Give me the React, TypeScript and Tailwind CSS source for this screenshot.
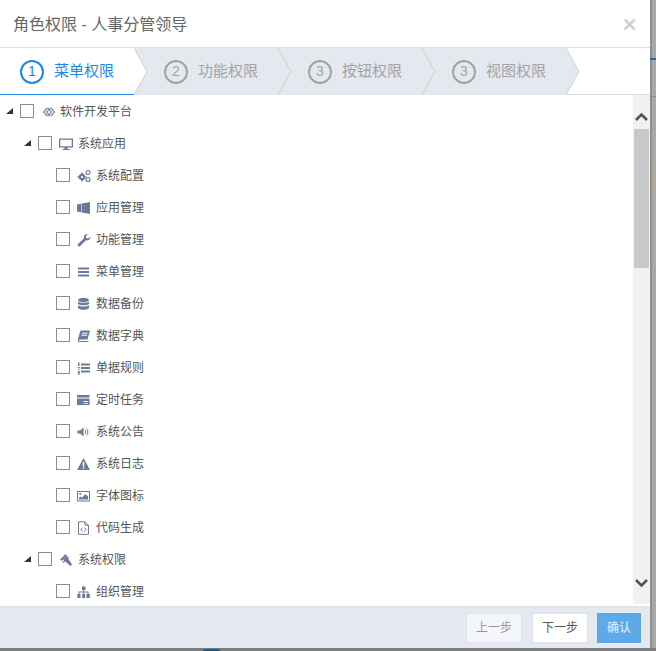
import type { ReactNode } from 'react';

const ICON = '#6b7a99';

// small 14x14 glyphs drawn to look like the tree's font icons
const icons: Record<string, ReactNode> = {
  code: (
    <g fill="none" stroke="#7a8aa8" strokeWidth="1.2">
      <path d="M5 3 1.500 7 5 11" />
      <path d="M9 3 12.500 7 9 11" />
      <path d="M8.500 3 4.500 7l3.500 4M5.500 3l4 4-4 4" />
    </g>
  ),
  desktop: <path fill={ICON} d="M0 1.500h14v9H8.500v1.500h2V13h-7v-1h2v-1.500H0zM1.300 2.800v6.400h11.400V2.800z" fillRule="evenodd" />,
  cogs: (
    <g fill={ICON}>
      <circle cx="5" cy="8" r="3.200" />
      <circle cx="5" cy="8" r="1.100" fill="#fff" />
      <path d="M4.200 3.500h1.600v1.400H4.200zM4.200 11h1.600v1.500H4.200zM.5 7.200h1.400v1.600H.5zM8.100 7.200h1.400v1.600H8.100z" />
      <circle cx="11" cy="3.500" r="2" fill="none" stroke={ICON} strokeWidth="1.200" />
      <circle cx="11" cy="10.500" r="2" fill="none" stroke={ICON} strokeWidth="1.200" />
    </g>
  ),
  windows: <path fill={ICON} d="M0 3.500 4.500 2.600v8.800L0 10.500zM5 2.400 13 1v12l-8-1.500z" />,
  wrench: <path fill={ICON} d="M1 13 0.500 11.500 6.800 5.500C6.300 3 8 .8 10.800 1L8.800 3.200l.6 1.900 1.900.5L13.500 3.500C13.800 6.200 11.500 8 9 7.300L2.600 13.500z" />,
  bars: <path fill={ICON} d="M1 2.500h11v2H1zM1 6h11v2H1zM1 9.500h11v2H1z" />,
  database: (
    <g fill={ICON}>
      <ellipse cx="6.500" cy="3" rx="5.500" ry="2.200" />
      <path d="M1 4.500C2.500 6.200 10.500 6.200 12 4.500V7C10.500 8.700 2.500 8.700 1 7zM1 8.200C2.500 9.900 10.500 9.900 12 8.200V11c-1.500 2.400-9.500 2.400-11 0z" />
    </g>
  ),
  book: <path fill={ICON} d="M3.500 1.500h9.500L10.500 10.500H2.800c-.9 0-1 1.500 0 1.500h8.500v1H2.300C.8 13 .5 11.500 1 10zM5 3.800v1h5.500v-1zM4.500 5.800v1H10v-1z" fillRule="evenodd" />,
  listol: (
    <g fill={ICON}>
      <path d="M4 2.500h9v2H4zM4 6h9v2H4zM4 9.500h9v2H4z" />
      <path d="M1 1.500h1.500v3.500H1zM.8 6h2v1h-2zM1 7.800h1.800v1H1zM.8 10h2v3.500h-2v-1h1v-.3h-1v-1h1v-.2h-1z" />
    </g>
  ),
  card: <path fill={ICON} d="M0 2h12.500v2.500H0zM0 5.500h12.500V12H0zM6.500 8v1h4.500V8zM6.500 10v.8h4.500V10z" fillRule="evenodd" />,
  bullhorn: (
    <g>
      <path fill={ICON} d="M.5 5.500h2.500L6.500 2.500v9L3 8.500H.5z" />
      <path fill="none" stroke={ICON} d="M8 5c.9 1 .9 3 0 4M9.700 3.800c1.600 1.800 1.600 4.600 0 6.400" />
    </g>
  ),
  warning: <path fill={ICON} d="M6.500 1 13 13H0zM5.700 5v4.500h1.600V5zM5.700 10.200v1.500h1.600v-1.500z" fillRule="evenodd" />,
  picture: (
    <g fill={ICON}>
      <path d="M0 2h13v10.500H0zM1 3v8.500h11V3z" fillRule="evenodd" />
      <circle cx="3.300" cy="5" r="1.100" />
      <path d="M2 10.500V8.800L3.500 7.500l1.300 1.200L8.500 5 11 7.500v3z" />
    </g>
  ),
  filecode: (
    <g fill="none" stroke={ICON} strokeWidth="1">
      <path d="M1.500 .8H8L11.500 4.300v9h-10zM8 .8v3.500h3.500" />
      <path d="M5.500 6.500 4 8.500l1.500 2M7.500 6.500l1.500 2-1.500 2" />
    </g>
  ),
  gavel: (
    <g fill={ICON}>
      <path d="M4 6.500 7.500 3l5.500 8.500-1.500 1.500z" />
      <path d="M1 6.500 6.500 1 8 2.500 2.500 8z" />
      <path d="M3.500 9 9 3.500l1 1L4.500 10z" />
    </g>
  ),
  sitemap: <path fill={ICON} d="M5 1.500h3.500v3.500H7.200v1.500H11.500v2.500h1.300V13H9.500V9h1V7.500H7.200V9h1v4H5.200V9h1V7.500H2.500V9h1v4H.3V9h1.200V6.500h4.700V5H5z" />,
};

type Row = { label: string; level: 0 | 1 | 2; icon: string };

const rows: Row[] = [
  { label: '软件开发平台', level: 0, icon: 'code' },
  { label: '系统应用', level: 1, icon: 'desktop' },
  { label: '系统配置', level: 2, icon: 'cogs' },
  { label: '应用管理', level: 2, icon: 'windows' },
  { label: '功能管理', level: 2, icon: 'wrench' },
  { label: '菜单管理', level: 2, icon: 'bars' },
  { label: '数据备份', level: 2, icon: 'database' },
  { label: '数据字典', level: 2, icon: 'book' },
  { label: '单据规则', level: 2, icon: 'listol' },
  { label: '定时任务', level: 2, icon: 'card' },
  { label: '系统公告', level: 2, icon: 'bullhorn' },
  { label: '系统日志', level: 2, icon: 'warning' },
  { label: '字体图标', level: 2, icon: 'picture' },
  { label: '代码生成', level: 2, icon: 'filecode' },
  { label: '系统权限', level: 1, icon: 'gavel' },
  { label: '组织管理', level: 2, icon: 'sitemap' },
];

const steps = [
  { n: 1, label: '菜单权限' },
  { n: 2, label: '功能权限' },
  { n: 3, label: '按钮权限' },
  { n: 3, label: '视图权限' },
];

function Step({ n, label, active }: { n: number; label: string; active: boolean }) {
  return (
    <div className={active ? 'relative w-[134px] h-[47px] bg-white' : 'relative w-[144px] h-[47px] bg-[#e4e8ef]'}>
      <div className={active ? 'flex items-center h-full pl-[20px] gap-[10px]' : 'flex items-center h-full pl-[30px] gap-[10px]'}>
        <span className={active
          ? 'flex items-center justify-center w-6 h-6 rounded-full border-2 border-[#1e88e5] text-[#1e88e5] text-[14px]'
          : 'flex items-center justify-center w-6 h-6 rounded-full border-2 border-[#a3a3a3] text-[#a3a3a3] text-[14px]'}>
          {n}
        </span>
        <span className={active ? 'text-[15px] text-[#1e88e5]' : 'text-[15px] text-[#a3a3a3]'}>{label}</span>
      </div>
      {active && <div className="absolute left-0 right-0 bottom-0 h-[1px] bg-[#1e88e5]" />}
      <svg className="absolute top-0 left-full z-10" width="14" height="47" viewBox="0 0 14 47">
        <path d="M0 0 13 23.500 0 47z" fill={active ? '#fff' : '#e4e8ef'} />
        <path d="M0 0 13 23.500 0 47" fill="none" stroke="#cfcfcf" />
      </svg>
    </div>
  );
}

function TreeRow({ row }: { row: Row }) {
  return (
    <div className={
      row.level === 0 ? 'flex items-center h-8 pl-[6px]' : row.level === 1 ? 'flex items-center h-8 pl-[24px]' : 'flex items-center h-8 pl-[56px]'
    }>
      {row.level < 2 && (
        <svg className="mr-[7px] mb-[2px]" width="7" height="7" viewBox="0 0 7 7"><path d="M7 0V6H0z" fill="#333" /></svg>
      )}
      <span className="w-[14px] h-[14px] mb-[2px] border border-[#8c8c8c] bg-white shrink-0" />
      <svg className={row.level === 0 ? 'ml-[8px] mr-[4px]' : 'ml-[7px] mr-[5px]'} width="14" height="14" viewBox="0 0 14 14">
        {icons[row.icon]}
      </svg>
      <span className="text-[12px] text-[#555]">{row.label}</span>
    </div>
  );
}

export default function App() {
  return (
    <div className="relative w-[656px] h-[651px] bg-[#7d7d7d] overflow-hidden font-['Liberation_Sans','Noto_Sans_CJK_SC',sans-serif]">
      {/* bits of the dimmed page behind the dialog */}
      <div className="absolute right-0 top-0 w-[6px] h-[648px] bg-[#a8a8a8] border-l-2 border-[#909090]" />
      <div className="absolute right-0 top-[58px] w-[6px] h-[2px] bg-[#1f6aa5]" />
      <div className="absolute right-0 top-[96px] w-[6px] h-[1px] bg-[#8a8a8a]" />
      <div className="absolute right-0 top-[163px] w-[4px] h-[33px] bg-[#b0a89a]" />
      <div className="absolute left-[203px] top-[649px] w-[17px] h-[2px] rounded-t-full bg-[#1d5a8c]" />

      <div className="relative flex flex-col w-[650px] h-[648px] bg-white">
        <div className="flex items-center justify-between h-[47px] pl-[13px] pr-[13px] pt-[2px] shrink-0">
          <h1 className="text-[16px] text-[#666]">角色权限 - 人事分管领导</h1>
          <span className="text-[#cfcfcf] text-[18px] font-bold leading-none">✕</span>
        </div>

        <div className="flex h-[48px] border-y border-[#dedede] shrink-0">
          {steps.map((s, i) => <Step key={s.label} n={s.n} label={s.label} active={i === 0} />)}
        </div>

        <div className="flex flex-1 min-h-0">
          <div className="flex-1 overflow-hidden pt-[1px]">
            {rows.map((r) => <TreeRow key={r.label} row={r} />)}
          </div>
          <div className="flex flex-col items-center w-[17px] h-[509px] bg-[#f1f1f1] shrink-0">
            <div className="flex items-end justify-center h-[34px] w-full pb-[8px]">
              <svg width="13" height="9" viewBox="0 0 13 9"><path d="M1 8 6.500 2.500 12 8" fill="none" stroke="#505050" strokeWidth="2.500" /></svg>
            </div>
            <div className="w-[15px] h-[139px] bg-[#c8c8c8]" />
            <div className="flex-1" />
            <div className="flex items-start justify-center h-[25px] w-full">
              <svg width="13" height="9" viewBox="0 0 13 9"><path d="M1 1l5.500 5.500L12 1" fill="none" stroke="#505050" strokeWidth="2.500" /></svg>
            </div>
          </div>
        </div>

        <div className="flex justify-end gap-[10px] h-[42px] pt-[6px] pr-[9px] bg-[#e4e8ef] border-t border-[#dae0e8] shrink-0">
          <button className="w-[56px] h-[30px] border border-[#dfe3ea] bg-[#f3f5f9] text-[12px] text-[#999]">上一步</button>
          <button className="w-[56px] h-[30px] border border-[#dfe3ea] bg-white text-[12px] text-[#555]">下一步</button>
          <button className="w-[44px] -ml-[1px] h-[30px] border border-[#5aa5e6] bg-[#5eaae9] text-[12px] text-white/85">确认</button>
        </div>
      </div>
    </div>
  );
}
